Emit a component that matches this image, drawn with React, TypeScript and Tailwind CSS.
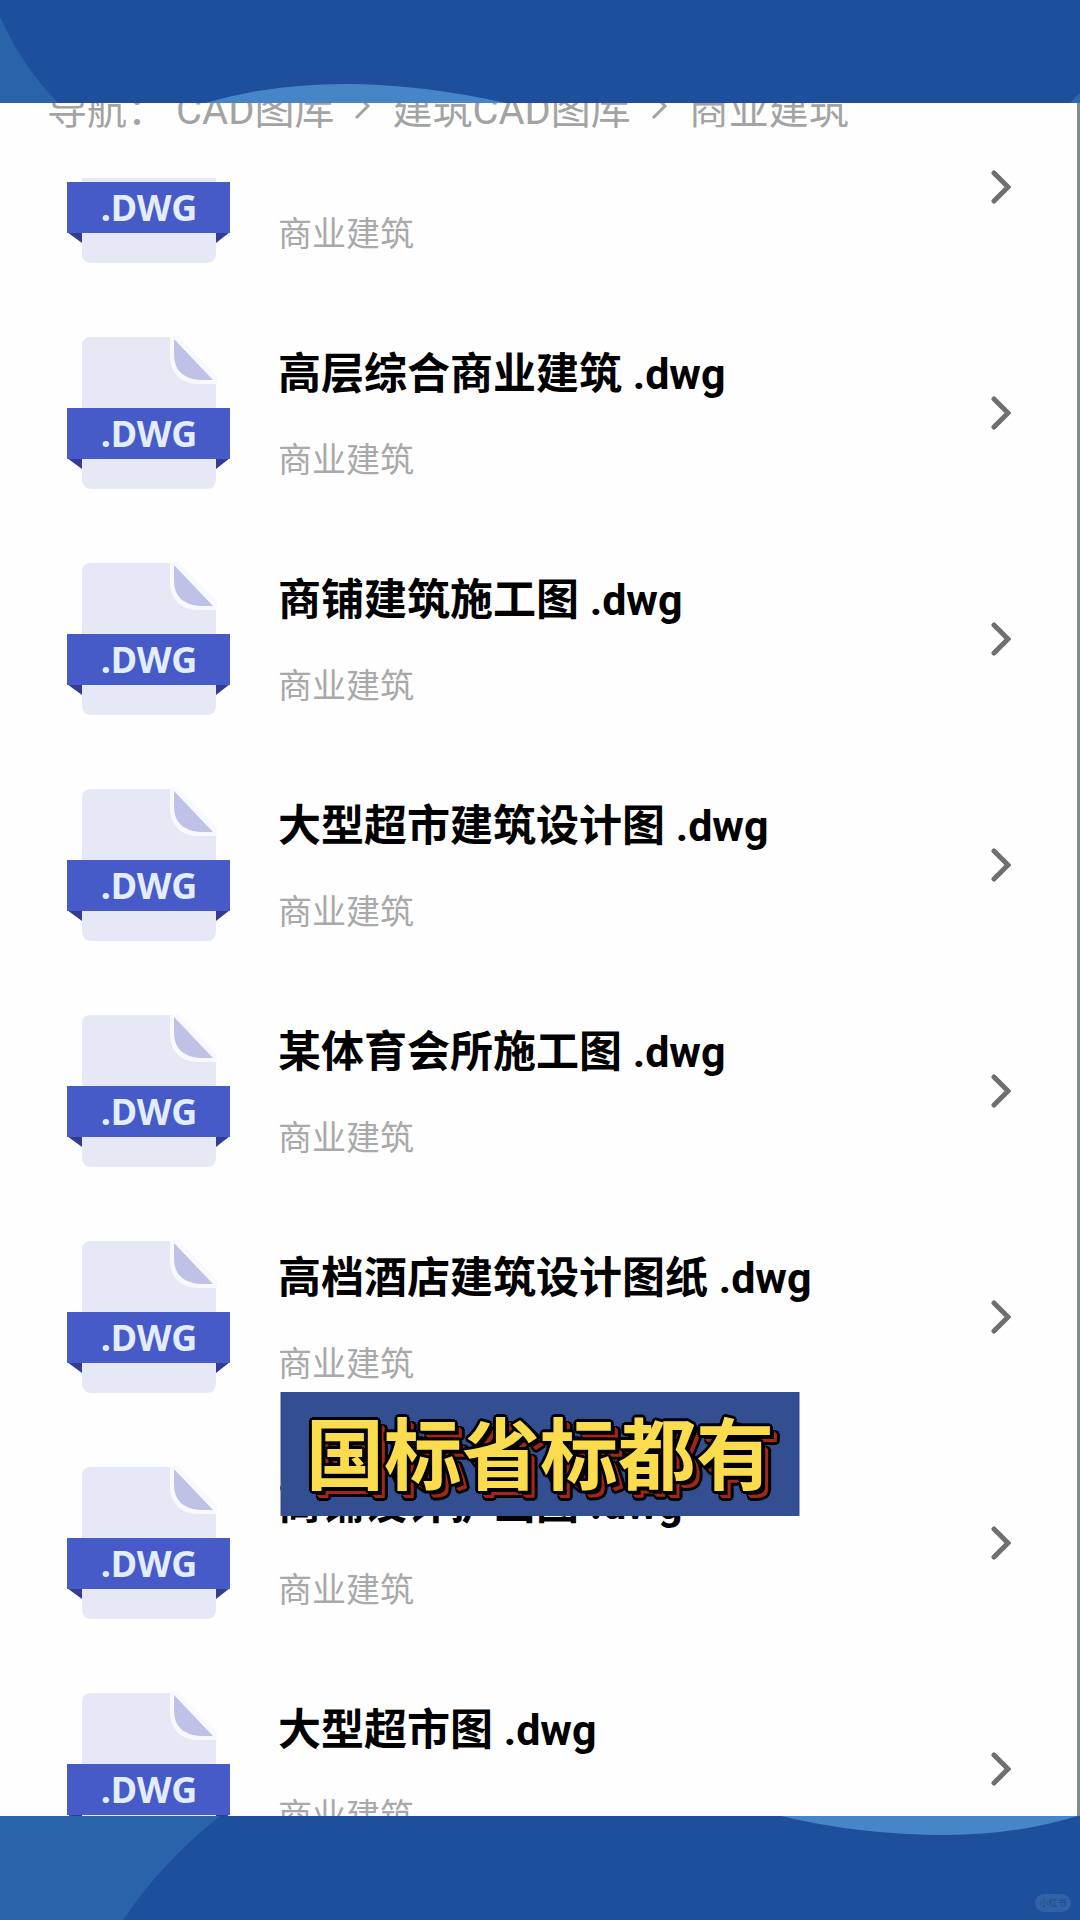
import React from 'react';

interface DrawingFile {
  id: number;
  name?: string;
  category: string;
}

const files: DrawingFile[] = [
  { id: 1, category: '商业建筑' },
  { id: 2, name: '高层综合商业建筑 .dwg', category: '商业建筑' },
  { id: 3, name: '商铺建筑施工图 .dwg', category: '商业建筑' },
  { id: 4, name: '大型超市建筑设计图 .dwg', category: '商业建筑' },
  { id: 5, name: '某体育会所施工图 .dwg', category: '商业建筑' },
  { id: 6, name: '高档酒店建筑设计图纸 .dwg', category: '商业建筑' },
  { id: 7, name: '商铺设计扩出图 .dwg', category: '商业建筑' },
  { id: 8, name: '大型超市图 .dwg', category: '商业建筑' },
];

const crumbs = ['CAD图库', '建筑CAD图库', '商业建筑'];

const DwgIcon: React.FC = () => (
  <svg viewBox="0 0 165 155" className="w-[165px] h-[155px] shrink-0" aria-hidden="true">
    <path d="M25 1H106L150 45V143Q150 153 140 153H26Q16 153 16 143V10Q16 1 25 1Z" fill="#e6e8f5" />
    <path d="M104 0V22Q106 47 132 48H151V40L112 0Z" fill="#f8f9ff" />
    <path d="M108 3L147 44H134Q108 42 108 18Z" fill="#bfc2e6" />
    <path d="M1 122L16 133V122Z" fill="#343c92" />
    <path d="M164 122L150 133V122Z" fill="#343c92" />
    <rect x="1" y="72" width="163" height="51" fill="#465ac8" />
    <text
      x="83"
      y="111"
      textAnchor="middle"
      fontSize="36"
      className="fill-[#e3edff] font-bold [font-family:'Noto_Sans','Open_Sans',sans-serif]"
    >
      .DWG
    </text>
  </svg>
);

const Chevron: React.FC = () => (
  <svg viewBox="0 0 20 34" className="w-5 h-[34px] shrink-0" fill="none" aria-hidden="true">
    <path d="M3 3L17 17L3 31" stroke="#6f6f6f" strokeWidth="5" strokeLinecap="round" />
  </svg>
);

const FileRow: React.FC<{ file: DrawingFile }> = ({ file }) => (
  <li>
    <button
      type="button"
      aria-label={file.name ?? file.category}
      className="w-full h-[226px] pl-[66px] pr-[66px] flex items-center text-left"
    >
      <DwgIcon />
      <div className="flex-1 min-w-0 ml-[47px] flex flex-col gap-[30px]">
        <div className="h-16 text-[43px] leading-[64px] font-bold text-black truncate">{file.name}</div>
        <div className="h-12 text-[34px] leading-[48px] text-[#a9a9a9]">{file.category}</div>
      </div>
      <Chevron />
    </button>
  </li>
);

export default function App() {
  return (
    <div className="relative h-screen flex flex-col overflow-hidden bg-[#1e4f9c] [font-family:Roboto,'Noto_Sans_CJK_SC',sans-serif]">
      <header className="h-[103px] shrink-0">
        <svg viewBox="0 0 1080 103" preserveAspectRatio="none" className="w-full h-full" aria-hidden="true">
          <path d="M0 17Q22 66 58 103H0Z" fill="#2964ab" />
          <path d="M205 103Q270 84 345 84Q420 84 506 103Z" fill="#4686c6" />
          <path d="M1070 103L1080 93V103Z" fill="#2d68ae" />
        </svg>
      </header>

      <main className="flex-1 min-h-0 overflow-hidden bg-[#fefefe] border-r-[3px] border-[#7d9087]">
        <nav
          aria-label="导航"
          className="relative z-10 h-[75px] mr-24 pl-[47px] bg-[#fefefe] overflow-hidden text-[40px] text-[#a3a3a3] whitespace-nowrap"
        >
          <ol className="-mt-[22px] h-[60px] flex items-center">
            <li className="w-[129px]">导航：</li>
            {crumbs.map((crumb, index) => (
              <li key={crumb} className="flex items-center">
                {index > 0 && (
                  <svg viewBox="0 0 58 40" className="w-[58px] h-10" fill="none" aria-hidden="true">
                    <path d="M22 3L34 15L22 27" stroke="#a3a3a3" strokeWidth="3" />
                  </svg>
                )}
                <a href="#">{crumb}</a>
              </li>
            ))}
          </ol>
        </nav>

        <ul className="-mt-[104px]">
          {files.map((file) => (
            <FileRow key={file.id} file={file} />
          ))}
        </ul>
      </main>

      <footer className="relative h-[104px] shrink-0">
        <svg viewBox="0 0 1080 104" preserveAspectRatio="none" className="w-full h-full" aria-hidden="true">
          <path d="M0 0H220Q162 46 123 104H0Z" fill="#2964ab" />
          <path d="M781 0Q860 19 946 19Q1015 19 1078 0Z" fill="#4686c6" />
        </svg>
        <span className="absolute right-[9px] bottom-2 w-9 h-[18px] rounded-full bg-[#3161a7] text-[9px] leading-[18px] text-center text-[#1f4a8d]">
          小红书
        </span>
      </footer>

      {/* subtitle banner over the list */}
      <p className="absolute z-20 left-1/2 bottom-[404px] -translate-x-1/2 w-[519px] h-[124px] pt-1 bg-[#334f91] text-center text-[78px] leading-[124px] font-bold whitespace-nowrap text-[#fbdc4f] [text-shadow:3px_0_#000,-3px_0_#000,0_3px_#000,0_-3px_#000,2px_2px_#000,-2px_2px_#000,2px_-2px_#000,-2px_-2px_#000,4px_4px_#000,5px_5px_#a3261c,6px_6px_#a3261c,7px_7px_#a3261c,10px_7px_#000,7px_10px_#000,9px_9px_#000,4px_7px_#000,7px_4px_#000,5px_9px_#000,9px_5px_#000]">
        国标省标都有
      </p>
    </div>
  );
}
